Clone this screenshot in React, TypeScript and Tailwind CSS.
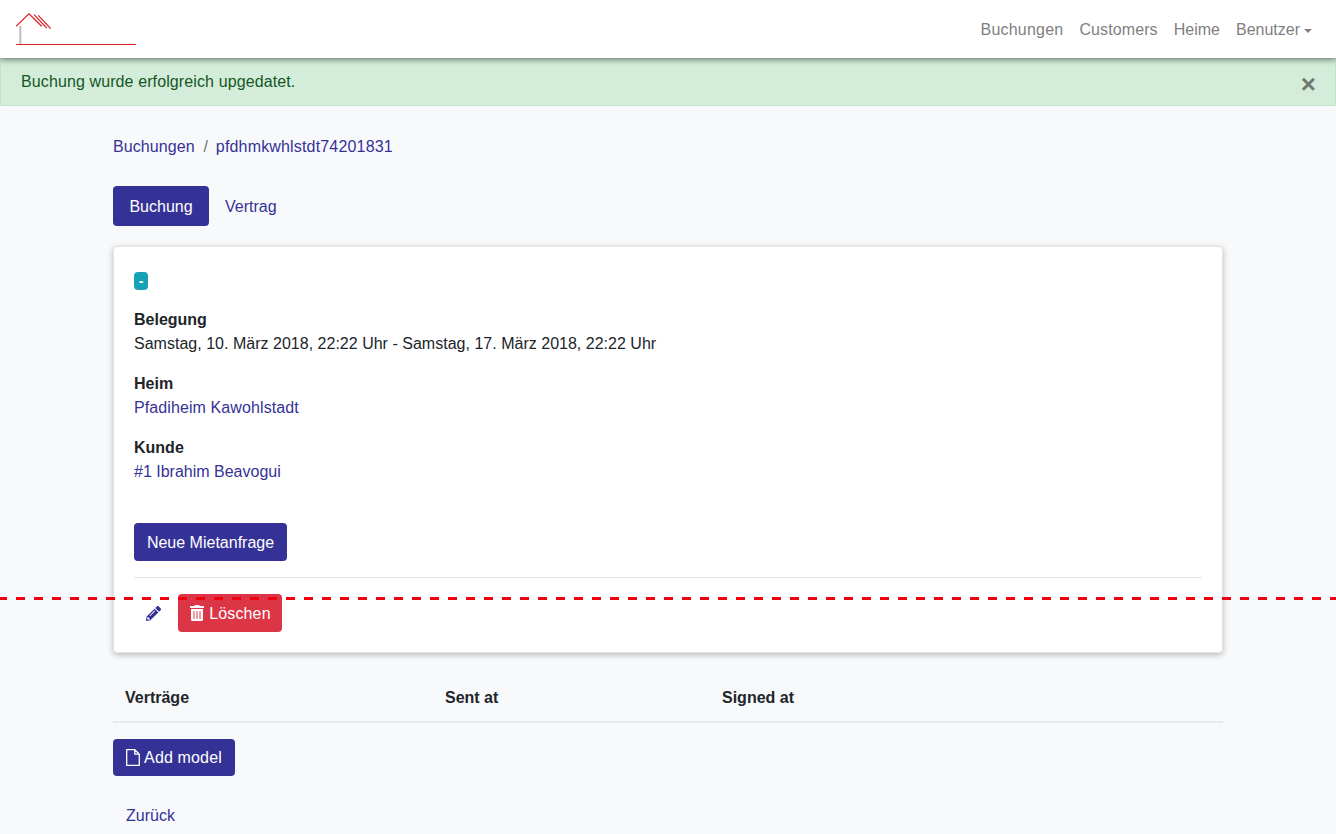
import { FaPencilAlt, FaTrashAlt } from "react-icons/fa";

const linkClass = "text-[#353297]";
const buttonClass =
  "inline-flex items-center justify-center rounded-[4px] bg-[#353297] pt-[2px] text-white";

const Logo = () => (
  <svg width="120" height="34" viewBox="0 0 120 34" fill="none" className="block">
    <path d="M4.3 13V31" stroke="#bdbdbd" strokeWidth="2" />
    <path d="M0 13.3L13 0.8L25.7 13.3" stroke="#dc1f26" strokeWidth="1.2" />
    <path d="M18 1.7L30.7 15M22.3 2.3L34.7 15.7" stroke="#dc1f26" strokeWidth="1.2" />
    <path d="M0 31.5H120" stroke="#dc1f26" strokeWidth="1" />
  </svg>
);

const FileIcon = () => (
  <svg width="14" height="17" viewBox="0 0 14 17" fill="none" className="block">
    <path
      d="M0.7 0.7H8.8L13.3 5.2V16.3H0.7V0.7ZM8.8 0.7V5.2H13.3"
      stroke="white"
      strokeWidth="1.3"
      strokeLinejoin="round"
    />
  </svg>
);

const Navbar = () => (
  <nav className="relative z-10 flex h-[58px] items-center justify-between bg-white pr-6 pl-4 shadow-[0_2px_6px_rgba(0,0,0,0.45)]">
    <div className="pt-[2px]">
      <Logo />
    </div>
    <ul className="flex items-center gap-4 pt-[2px] text-[#808080]">
      <li className="tracking-[0.22px]">Buchungen</li>
      <li className="tracking-[0.1px]">Customers</li>
      <li>Heime</li>
      <li className="flex items-center gap-[4px]">
        Benutzer
        <span className="mt-[1px] h-0 w-0 border-x-[4px] border-t-[4px] border-x-transparent border-t-[#808080]" />
      </li>
    </ul>
  </nav>
);

const Alert = () => (
  <div className="flex h-[48px] items-center justify-between border border-[#c3e6cb] bg-[#d4edda] pr-[19px] pl-5 text-[#155724]">
    <span className="tracking-[0.11px]">Buchung wurde erfolgreich upgedatet.</span>
    <span className="mt-[4px] text-[26px] leading-none font-bold text-[#6f7a72]">×</span>
  </div>
);

const Field = ({ label, children }: { label: string; children: React.ReactNode }) => (
  <div className="mb-4">
    <div className="font-bold text-[#212529]">{label}</div>
    <div>{children}</div>
  </div>
);

const BookingCard = () => (
  <div className="mt-5 rounded-[4px] border border-[#e3e3e3] bg-white px-5 pt-[25px] pb-5 shadow-[0_2px_6px_rgba(0,0,0,0.25)]">
    <div className="mb-[18px] flex h-[18px] w-[14px] items-center justify-center rounded-[4px] bg-[#17a2b8] text-sm font-bold text-white">
      -
    </div>
    <Field label="Belegung">
      <span className="tracking-[0.015px] text-[#212529]">
        Samstag, 10. März 2018, 22:22 Uhr - Samstag, 17. März 2018, 22:22 Uhr
      </span>
    </Field>
    <Field label="Heim">
      <a className={`${linkClass} tracking-[0.1px]`}>Pfadiheim Kawohlstadt</a>
    </Field>
    <Field label="Kunde">
      <a className={linkClass}>#1 Ibrahim Beavogui</a>
    </Field>
    <div className="pt-[23px]">
      <button className={`${buttonClass} h-[38px] w-[153px]`}>Neue Mietanfrage</button>
    </div>
    <hr className="mt-4 mb-4 border-[#e5e5e5]" />
    <div className="flex items-center">
      <a className={`${linkClass} flex w-[44px] justify-center pr-[5px]`}>
        <FaPencilAlt size={15} />
      </a>
      <button className="inline-flex h-[38px] w-[104px] items-center justify-center gap-[4px] rounded-[4px] bg-[#dc3545] pt-[2px] tracking-[0.12px] text-white">
        <FaTrashAlt size={16} className="-mt-[2px]" />
        Löschen
      </button>
    </div>
  </div>
);

const ContractsTable = () => (
  <table className="mt-[20px] w-full table-fixed border-collapse">
    <thead>
      <tr className="border-b-2 border-[#e9ecef] text-left font-bold text-[#212529]">
        <th className="w-[320px] px-3 pt-[13px] pb-[11px] leading-6">Verträge</th>
        <th className="w-[277px] px-3 pt-[13px] pb-[11px] leading-6">Sent at</th>
        <th className="px-3 pt-[13px] pb-[11px] leading-6">Signed at</th>
      </tr>
    </thead>
  </table>
);

export default function App() {
  return (
    <div className="h-[834px] overflow-hidden bg-[#f8f9fb] font-['Liberation_Sans',Arial,sans-serif] text-base leading-6 text-[#212529]">
      <Navbar />
      <Alert />
      <main className="mx-auto w-[1110px]">
        <div className="flex items-center pt-[29px] pb-[27px]">
          <a className={`${linkClass} tracking-[0.1px]`}>Buchungen</a>
          <span className="pr-2 pl-[8.5px] text-[#6c757d]">/</span>
          <a className={`${linkClass} tracking-[0.17px]`}>pfdhmkwhlstdt74201831</a>
        </div>
        <div className="flex items-center">
          <button className={`${buttonClass} h-[40px] w-[96px]`}>Buchung</button>
          <a className={`${linkClass} pt-[2px] pl-4`}>Vertrag</a>
        </div>
        <BookingCard />
        <ContractsTable />
        <button className="mt-4 inline-flex h-[37px] w-[122px] items-center justify-center gap-[4px] rounded-[4px] bg-[#353297] tracking-[0.15px] text-white">
          <FileIcon />
          Add model
        </button>
        <div className="pt-[28px] pl-[13px]">
          <a className={linkClass}>Zurück</a>
        </div>
      </main>
      <div className="absolute top-[597px] left-0 h-[3px] w-full bg-[repeating-linear-gradient(90deg,#f00010_0,#f00010_7px,transparent_7px,transparent_16px,#f00010_16px,#f00010_18px)]" />
    </div>
  );
}
